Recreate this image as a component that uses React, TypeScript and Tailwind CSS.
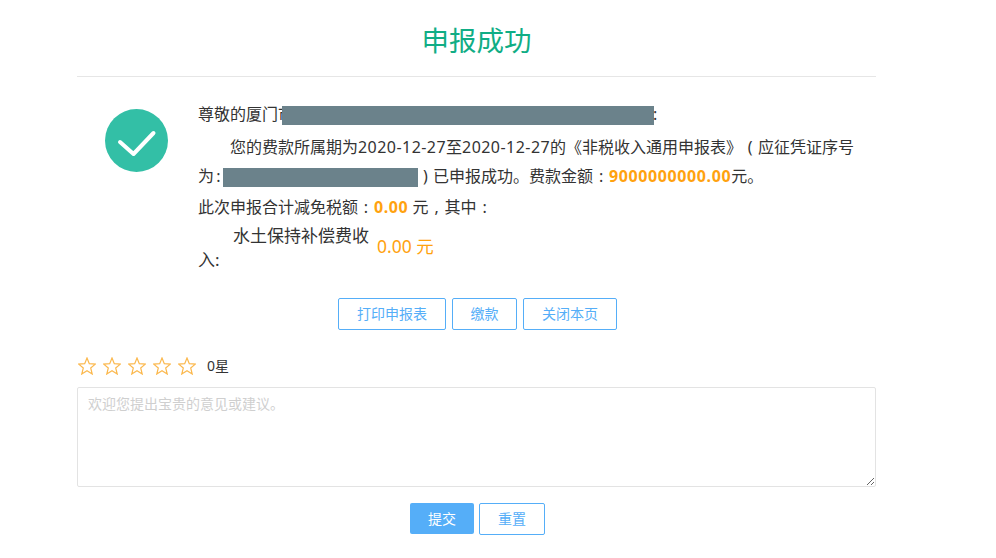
const FONT = '"Noto Sans", "Noto Sans CJK SC", sans-serif';

function Masked({ width, className = "" }: { width: string; className?: string }) {
  return <span className={`inline-block h-[19px] bg-[#6b828b] align-middle ${width} ${className}`} />;
}

// punctuation sits centred in a full character cell in the original
function Punct({ children, className = "w-4" }: { children: string; className?: string }) {
  return <span className={`inline-block text-center indent-0 ${className}`}>{children}</span>;
}

function Digits({ children }: { children: string }) {
  return <span className="tracking-[0.45px]">{children}</span>;
}

function Amount({ children }: { children: string }) {
  return <b className="tracking-[0.6px] text-[#ffa20f]">{children}</b>;
}

function StarIcon() {
  return (
    <svg width="18" height="18" viewBox="0 0 18 18" className="shrink-0">
      <polygon
        points="9,1 11.300,6.700 17.300,7.100 12.700,11 14.200,17 9,13.800 3.800,17 5.300,11 0.700,7.100 6.700,6.700"
        fill="none"
        stroke="#fbb84d"
        strokeWidth="1.2"
      />
    </svg>
  );
}

function Button({ children, solid, className = "px-[18px]" }: { children: string; solid?: boolean; className?: string }) {
  return (
    <button
      className={
        solid
          ? "h-[31px] w-[64px] rounded-[2px] bg-[#55aef8] text-sm text-white"
          : `h-[32px] rounded-[2px] border border-[#55aef8] text-sm text-[#55aef8] ${className}`
      }
    >
      {children}
    </button>
  );
}

export default function App() {
  return (
    <div className="min-h-[558px] bg-white pl-[77px] text-[#333]" style={{ fontFamily: FONT }}>
      <div className="w-[799px]">
        <div className="flex h-[77px] items-center justify-center border-b border-[#e6e6e6] pt-[6px]">
          <h1 className="text-[27.500px] leading-none text-[#10ad85]">申报成功</h1>
        </div>

        <div className="flex pt-[32px]">
          <div className="ml-[28px] mr-[30px] shrink-0">
            <svg width="63" height="63" viewBox="0 0 63 63">
              <circle cx="31.5" cy="31.5" r="31.5" fill="#33bfa6" />
              <path d="M15 33 L28.500 45 L48.500 24" fill="none" stroke="#fff" strokeWidth="4" strokeLinecap="round" strokeLinejoin="round" />
            </svg>
          </div>
          <div className="w-[665px] text-base">
            <p className="-mt-[5px] h-[20px] whitespace-nowrap leading-[20px]">
              尊敬的厦门市
              <Masked width="w-[372px]" className="-ml-3" />
              <span className="-ml-px">:</span>
            </p>
            <p className="mt-[9px] indent-8 leading-[29px]">
              您的费款所属期为<Digits>2020-12-27</Digits>至<Digits>2020-12-27</Digits>的《非税收入通用申报表》
              <Punct>(</Punct>应征凭证序号为
              <Punct className="w-[9px]">:</Punct>
              <Masked width="w-[195px]" />
              <Punct className="w-[15px]">)</Punct>已申报成功。费款金额<Punct>:</Punct>
              <Amount>9000000000.00</Amount>元。
            </p>
            <p className="mt-[2px] leading-[29px]">
              此次申报合计减免税额<Punct>:</Punct>
              <Amount>0.00</Amount> 元<Punct>,</Punct>其中<Punct>:</Punct>
            </p>
            <div className="mt-[2px] flex items-center">
              <div className="w-[179px] text-[17px] leading-[24px]">
                <span className="pl-[35px]">水土保持补偿费收</span>
                <br />
                入:
              </div>
              <span className="-mt-[4px] text-[17.500px] text-[#ffa20f]">0.00 元</span>
            </div>
          </div>
        </div>

        <div className="mt-[26px] flex justify-center gap-[6px] pl-[2px]">
          <Button>打印申报表</Button>
          <Button className="w-[65px]">缴款</Button>
          <Button>关闭本页</Button>
        </div>

        <div className="mt-[26px] ml-px flex items-center">
          <div className="flex gap-[7px]">
            <StarIcon />
            <StarIcon />
            <StarIcon />
            <StarIcon />
            <StarIcon />
          </div>
          <span className="ml-[11px] text-sm">0星</span>
        </div>

        <textarea
          className="mt-[11px] block h-[100px] w-full rounded-[2px] border border-[#e3e3e3] px-[10px] pt-[9px] text-sm leading-[14px] outline-none placeholder:text-[#cfcfcf]"
          placeholder="欢迎您提出宝贵的意见或建议。"
        />

        <div className="mt-[16px] flex items-start justify-center gap-[5px] pl-[2px]">
          <Button solid>提交</Button>
          <Button>重置</Button>
        </div>
      </div>
    </div>
  );
}
